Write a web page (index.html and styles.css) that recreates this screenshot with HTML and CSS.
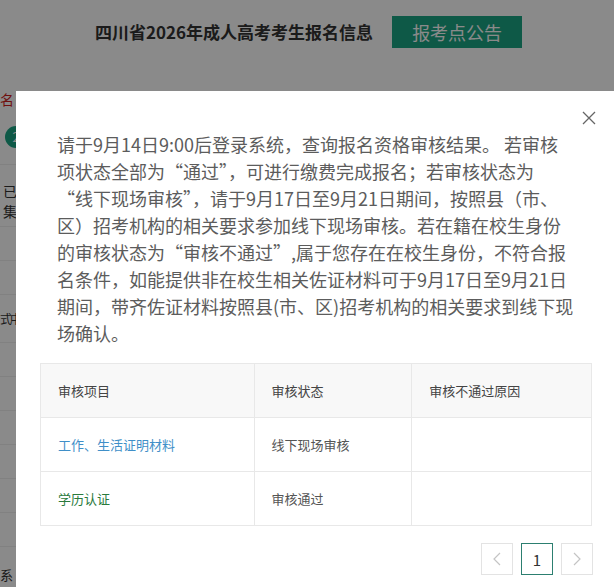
FILE: index.html
```html
<!DOCTYPE html>
<html lang="zh-CN">
<head>
<meta charset="utf-8">
<title>四川省2026年成人高考考生报名信息</title>
<link rel="stylesheet" href="styles.css">
</head>
<body>
<div class="page">
  <header class="top">
    <h1 class="title">四川省2026年成人高考考生报名信息</h1>
    <a class="notice-btn">报考点公告</a>
  </header>
  <div class="side">
    <div class="side-label">名</div>
    <div class="side-step"><span class="step-dot">2</span></div>
    <div class="side-text">已<br>集</div>
    <div class="side-row"></div>
    <div class="side-row"></div>
    <div class="side-row side-word">式中</div>
    <div class="side-row"></div>
    <div class="side-row"></div>
    <div class="side-row"></div>
    <div class="side-row"></div>
    <div class="side-row"></div>
    <div class="side-row"></div>
    <div class="side-row side-bottom">系</div>
  </div>
</div>
<div class="overlay"></div>
<div class="modal">
  <button class="close" aria-label="关闭">
    <svg width="14" height="14" viewBox="0 0 14 14"><path d="M1 1 L13 13 M13 1 L1 13" stroke="#666" stroke-width="1.3" fill="none"/></svg>
  </button>
  <p class="msg">请于9月14日9:00后登录系统，查询报名资格审核结果。 若审核<br>项状态全部为“通过”，可进行缴费完成报名；若审核状态为<br>“线下现场审核”，请于9月17日至9月21日期间，按照县（市、<br>区）招考机构的相关要求参加线下现场审核。若在籍在校生身份<br>的审核状态为“审核不通过”,属于您存在在校生身份，不符合报<br>名条件，如能提供非在校生相关佐证材料可于9月17日至9月21日<br>期间，带齐佐证材料按照县(市、区)招考机构的相关要求到线下现<br>场确认。</p>
  <table class="audit">
    <thead>
      <tr><th class="c1">审核项目</th><th class="c2">审核状态</th><th class="c3">审核不通过原因</th></tr>
    </thead>
    <tbody>
      <tr><td class="link-blue">工作、生活证明材料</td><td>线下现场审核</td><td></td></tr>
      <tr><td class="link-green">学历认证</td><td>审核通过</td><td></td></tr>
    </tbody>
  </table>
  <div class="pager">
    <span class="pg pg-arrow">
      <svg width="10" height="14" viewBox="0 0 10 14"><path d="M8 1 L2 7 L8 13" stroke="#c4c4c4" stroke-width="1.2" fill="none"/></svg>
    </span>
    <span class="pg pg-current">1</span>
    <span class="pg pg-arrow">
      <svg width="10" height="14" viewBox="0 0 10 14"><path d="M2 1 L8 7 L2 13" stroke="#c4c4c4" stroke-width="1.2" fill="none"/></svg>
    </span>
  </div>
</div>
</body>
</html>
```

FILE: styles.css
```css
* { box-sizing: border-box; }
html, body {
  margin: 0;
  padding: 0;
  width: 614px;
  height: 587px;
  overflow: hidden;
  background: #fff;
  font-family: "Noto Sans CJK SC", "Noto Sans", sans-serif;
}
.page {
  position: relative;
  height: 587px;
}
.top {
  display: flex;
  align-items: center;
  gap: 19px;
  padding: 16px 0 0 95px;
  height: 48px;
}
.title {
  margin: 0;
  font-size: 17px;
  font-weight: bold;
  color: #333;
  line-height: 32px;
}
.notice-btn {
  display: flex;
  align-items: center;
  justify-content: center;
  width: 130px;
  height: 32px;
  background: #1aa483;
  color: #fff;
  font-size: 18px;
}
.side {
  margin-top: 40px;
  width: 40px;
  display: flex;
  flex-direction: column;
  font-size: 14px;
  color: #333;
}
.side-label {
  color: #d01e1e;
  height: 22px;
  line-height: 22px;
}
.side-step {
  height: 55px;
  display: flex;
  align-items: center;
  border-bottom: 1px solid #eee;
}
.step-dot {
  display: inline-block;
  width: 22px;
  height: 22px;
  border-radius: 50%;
  background: #1aa483;
  margin-left: 5px;
  color: #fff;
  font-size: 13px;
  text-align: center;
  line-height: 22px;
}
.side-text {
  height: 62px;
  line-height: 20px;
  padding-top: 16px;
  padding-left: 3px;
  border-bottom: 1px solid #eee;
}
.side-row {
  height: 34px;
  border-bottom: 1px solid #eee;
  font-size: 13px;
  line-height: 34px;
}
.side-word {
  height: 48px;
  line-height: 48px;
  font-size: 12px;
  letter-spacing: -2px;
  white-space: nowrap;
}
.side-bottom {
  border-bottom: none;
  line-height: 56px;
}
.overlay {
  position: fixed;
  inset: 0;
  background: rgba(0, 0, 0, 0.46);
}
.modal {
  position: absolute;
  left: 16px;
  top: 91px;
  width: 620px;
  height: 510px;
  background: #fff;
  padding: 40px 0 0 24px;
}
.close {
  position: absolute;
  top: 20px;
  left: 566px;
  width: 14px;
  height: 14px;
  padding: 0;
  border: 0;
  background: none;
  display: block;
}
.close svg { display: block; }
.msg {
  margin: 0 0 16px 17px;
  width: 560px;
  font-size: 18px;
  line-height: 27px;
  color: #5c5c5c;
  white-space: nowrap;
}
.audit {
  width: 552px;
  border-collapse: collapse;
  font-size: 13px;
  color: #555;
}
.audit th, .audit td {
  border: 1px solid #e8e8e8;
  height: 54px;
  padding: 0 0 0 17px;
  text-align: left;
  font-weight: normal;
}
.audit thead th {
  background: #f8f8f8;
  color: #444;
}
.c1 { width: 214px; }
.c2 { width: 158px; }
.c3 { width: 180px; }
.audit td.link-blue { color: #3f8fc8; }
.audit td.link-green { color: #2a7a3c; }
.pager {
  width: 553px;
  display: flex;
  justify-content: flex-end;
  gap: 8px;
  margin-top: 17px;
}
.pg {
  width: 32px;
  height: 32px;
  border: 1px solid #e3e3e3;
  display: flex;
  align-items: center;
  justify-content: center;
  font-size: 15px;
  color: #333;
}
.pg-current {
  border-color: #2c7f70;
}
```
